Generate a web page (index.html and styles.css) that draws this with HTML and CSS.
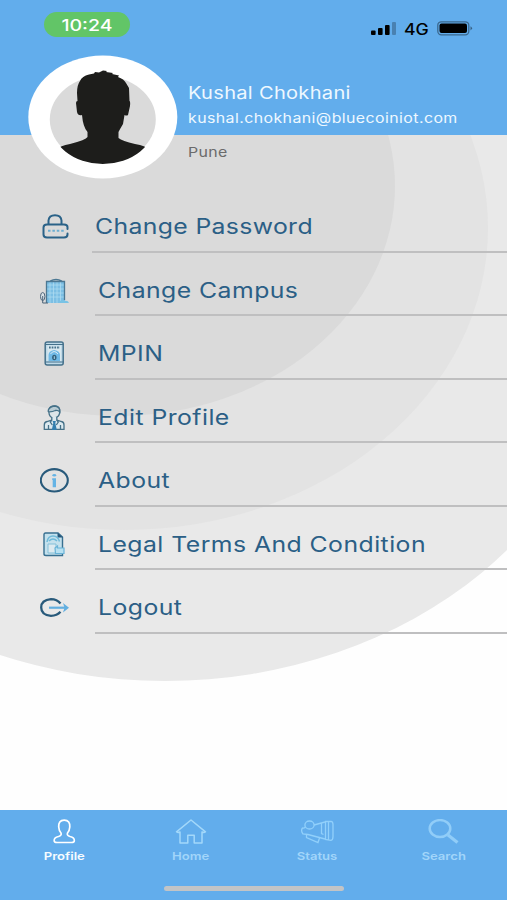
FILE: index.html
```html
<!DOCTYPE html>
<html lang="en">
<head>
<meta charset="utf-8">
<title>Profile</title>
<link rel="stylesheet" href="styles.css">
</head>
<body>
<div class="screen">
  <svg class="rings" viewBox="0 0 507 675" aria-hidden="true">
    <ellipse cx="165" cy="176" rx="448" ry="370" fill="#e9e9e9"/>
    <ellipse cx="124" cy="93" rx="364" ry="302" fill="#e3e3e3"/>
    <ellipse cx="118" cy="51" rx="277" ry="230" fill="#dadada"/>
  </svg>
  <header class="header">
    <div class="status">
      <div class="clock"><span class="wide">10:24</span></div>
      <div class="signals">
        <svg width="26" height="14" viewBox="0 0 26 14"><rect x="0" y="8.500" width="4.600" height="4.500" rx="1"/><rect x="7" y="6" width="4.600" height="7" rx="1"/><rect x="14" y="3" width="4.600" height="10" rx="1"/><rect x="21" y="0" width="4" height="13" rx="1" opacity=".25"/></svg>
        <span class="network wide">4G</span>
        <svg class="battery" width="36" height="15" viewBox="0 0 36 15"><rect x=".8" y=".8" width="31" height="13" rx="3.500" fill="none" stroke="#000" stroke-opacity=".4" stroke-width="1.300"/><rect x="2.500" y="2.500" width="27.500" height="9.500" rx="2"/><path d="M33.500 5.200q3 2.200 0 4.200z" opacity=".45"/></svg>
      </div>
    </div>
  </header>
  <section class="person">
    <svg class="avatar" width="150" height="124" viewBox="0 0 150 124">
      <defs><clipPath id="face"><path d="M0 0H150V66H127.800A53 43 0 0 1 21.800 66H0z"/></clipPath></defs>
      <ellipse cx="74.800" cy="62" rx="74.500" ry="61.500" fill="#fff"/>
      <ellipse cx="74.800" cy="64.500" rx="53" ry="43.500" fill="#dadada"/>
      <path clip-path="url(#face)" fill="#1d1d1b" d="M49.500 46L49 38Q49 30 52 26Q54 21 61 19.500L66 18.500L67 17L71 17.500L75 15.500L79 16L78 17L85 18L84 19L91 20.500L90 22Q96 24 98 28L101 33L101.500 46Q102.500 46 102 51L100 60Q98.500 61 96.500 60L95 69Q92 74 90.500 77V83Q94 86 107 89Q118 91 120 94L120 112H29V94Q32 91 42 89Q58 85 59.500 82V77Q55 72 54 60Q50 61 49 57L48 48Q48 46 49.500 46Z"/>
    </svg>
    <div class="details">
      <div class="name"><span class="wide">Kushal Chokhani</span></div>
      <div class="email"><span class="wide">kushal.chokhani@bluecoiniot.com</span></div>
      <div class="city"><span class="wide">Pune</span></div>
    </div>
  </section>
  <nav class="menu">
    <a class="row first"><svg class="icon" viewBox="0 0 30 26" fill="none" stroke="#2a6288" stroke-width="2"><path d="M7.500 10V6.500Q8 1.200 14 1.200T20.500 6.500V10M26.500 15V13Q26.500 10.500 23 10.500H6Q2.500 10.500 2.500 13.500V20.500Q2.500 23.500 6 23.500H23Q26.500 23.500 26.500 20.500V19.500" stroke-linecap="round"/><path d="M7 16.800H23" stroke="#6caed1" stroke-width="2" stroke-dasharray="2.500 1.900"/></svg><span class="label"><span class="wide">Change Password</span></span></a>
    <a class="row"><svg class="icon" viewBox="0 0 30 26"><path d="M7 3H25V25H7z" fill="#7cbfe4"/><path d="M10 3V25M13.500 3V25M17 3V25M20.500 3V25M7 7H25M7 11H25M7 15H25M7 19H25" stroke="#b3def2" stroke-width=".7"/><path d="M6.500 25V3.500H24.500V22M10 3Q13 1.500 16 1.500T22 3" fill="none" stroke="#4c7893" stroke-width="1.300"/><ellipse cx="2.700" cy="18.500" rx="2.200" ry="4" fill="#d8e1e7" stroke="#4d6479"/><path d="M2.700 18V25H8" fill="none" stroke="#4d6479"/><path d="M19 25Q20 21 24 23Q28 22 29 25z" fill="#79c3e5"/></svg><span class="label"><span class="wide">Change Campus</span></span></a>
    <a class="row"><svg class="icon" viewBox="0 0 30 26"><rect x="5.200" y="1" width="18" height="23" rx="2" fill="#bfdae8" stroke="#45718b" stroke-width="1.500"/><path d="M5.500 3.500H23.500M5.500 21H23.500" stroke="#45718b" stroke-width="1.200"/><rect x="7.500" y="4.500" width="13.500" height="15.500" fill="#d8e8ef"/><path d="M9 6.500H20" stroke="#45718b" stroke-width="2" stroke-dasharray="1.700 1"/><path d="M8.500 20V14Q8.500 10 14.200 9Q20 10 20 14V20z" fill="#6fb9e6"/><path d="M10.500 13Q14 8 18 13" fill="none" stroke="#ddecf4"/><ellipse cx="14.300" cy="16.500" rx="2.200" ry="2.800" fill="#32617c"/><path d="M14.300 15.200V18" stroke="#aad7ed"/></svg><span class="label"><span class="wide">MPIN</span></span></a>
    <a class="row"><svg class="icon" viewBox="0 0 30 26" fill="none" stroke="#457188" stroke-width="1.300"><path d="M8.800 7Q8.300 1 14.300 1T19.800 7Q19.300 12.500 14.300 12.800T8.800 7Z" fill="#dde5e8"/><path d="M8.300 7V5Q10.300 1 15.300 1Q20.300 2 19.800 7Q18.300 5 15.300 5.500Q12.300 7 8.800 6.800" fill="#b8cbd3"/><path d="M11.800 12V15L7 16.500Q4.300 17 4.300 20V24.300H24V20Q24 17 21.500 16.500L16.800 15V12" fill="#dbe9ef"/><path d="M8.500 24V20M20.500 24V20M11.800 15L10.300 17L12.300 20M16.800 15L18.300 17L16.300 20"/><path d="M12.600 16H15.900L15.300 18L16.800 25H11.800L13.300 18z" fill="#337fae" stroke="none"/></svg><span class="label"><span class="wide">Edit Profile</span></span></a>
    <a class="row"><svg class="icon" viewBox="0 0 30 26"><ellipse cx="14.300" cy="12.300" rx="13.500" ry="11.200" fill="none" stroke="#285a7b" stroke-width="2.100"/><ellipse cx="14.300" cy="7.300" rx="1.900" ry="1.200" fill="#66b4e5"/><path d="M12.200 10.300H16V19.300H12.700V12H12.200z" fill="#66b4e5"/></svg><span class="label"><span class="wide">About</span></span></a>
    <a class="row"><svg class="icon" viewBox="0 0 30 26"><path d="M5.500 1H18L22.500 5V23.500H6Q4 23.500 4 22V2.500Q4 1 5.500 1Z" fill="#c4e1ed" stroke="#376f90" stroke-width="1.400"/><path d="M17.500 1V5.500H23z" fill="#28587a"/><path d="M7 10Q8 4 13 4T19.500 9.500M9 9Q13 5 17 9" fill="none" stroke="#70bad9" stroke-width="1.500"/><path d="M8 12H16V21H8z" fill="#dceaf0" stroke="#83bfd8"/><path d="M15 16L17.500 14V16H24V21.500H15.500z" fill="#b7e0f1" stroke="#69b3d7" stroke-width="1.200"/></svg><span class="label"><span class="wide">Legal Terms And Condition</span></span></a>
    <a class="row"><svg class="icon" viewBox="0 0 30 26" fill="none"><path d="M20.500 8.500Q17 4.200 11 4.200Q1.200 5 1.200 12.500T11 20.800Q17 20.800 20.500 16.800" stroke="#285a7b" stroke-width="2.300"/><path d="M9 12.700H27" stroke="#62afe0" stroke-width="2.200"/><path d="M23 8L29 12.700L23 17.500L24.500 12.700z" fill="#62afe0"/></svg><span class="label"><span class="wide">Logout</span></span></a>
  </nav>
  <footer class="tabs">
    <a class="tab active"><svg viewBox="0 0 34 26" fill="none" stroke="#fff" stroke-width="1.700"><path d="M17.200 1.200C13 1.200 11.500 4 11.700 8Q12 12 14 14Q15 16.500 11.500 17.500Q7 18.500 7.200 21.500Q7 23.500 10 23.500H24.500Q27.500 23.500 27.300 21.500Q27.500 18.500 23 17.500Q19.500 16.500 20.500 14Q22.500 12 22.800 8C23 4 21.500 1.200 17.200 1.200Z"/></svg><span class="wide">Profile</span></a>
    <a class="tab"><svg viewBox="0 0 34 26" fill="none" stroke="#a3d8fa" stroke-width="1.500"><path d="M2.500 12.800L17 1L31.500 12.800Q30 14.200 28 13V24H20.200V16.200H13.800V24H6V13Q4 14.200 2.500 12.800Z" stroke-linejoin="round"/></svg><span class="wide">Home</span></a>
    <a class="tab"><svg viewBox="0 0 34 26" fill="none" stroke="#91d0fb" stroke-width="1.300"><ellipse cx="9.500" cy="6" rx="4.600" ry="4"/><path d="M5.500 8Q4 9.500 2.500 9Q.5 11.500 3 15L8 15.500L25 20M14 6L25 3M6.500 16V18.500L18 23.500L19.500 19M21.500 4.500V14.500L23.500 15.500"/><path d="M25.500 2.500L31 2.300Q33 2.300 33 5.500V17.500Q33 21 31 21.300L25.500 20.500zM28.500 2.500V21"/></svg><span class="wide">Status</span></a>
    <a class="tab"><svg viewBox="0 0 34 26" fill="none" stroke="#91cdf8" stroke-width="2.500"><ellipse cx="13" cy="9.500" rx="10.300" ry="8.400"/><path d="M21 16L30.500 23.500" stroke-width="3.200"/></svg><span class="wide">Search</span></a>
    <div class="home-bar"></div>
  </footer>
</div>
</body>
</html>
```

FILE: styles.css
```css
* { box-sizing: border-box; }
body { margin: 0; font-family: Inter, "Liberation Sans", sans-serif; }
.screen { position: relative; width: 507px; height: 900px; overflow: hidden; background: #fefefe; display: flex; flex-direction: column; }
.rings { position: absolute; left: 0; top: 135px; width: 507px; height: 675px; }
.header { position: relative; height: 135px; flex: none; background: #62adec; }
.status { display: flex; justify-content: space-between; padding: 12px 34px 0 44px; }
.clock { width: 86px; height: 25px; border-radius: 13px; background: #62c567; color: #fff; font-size: 16px; font-weight: 500; line-height: 26px; text-align: center; }
.clock .wide { transform: scaleX(1.22); transform-origin: center; }
.signals { display: flex; align-items: flex-start; padding-top: 10px; width: 102px; }
.signals svg { flex: none; }
.network { width: 31px; margin: -1px 0 0 7px; font-size: 15.5px; font-weight: 500; line-height: 18px; }
.signals .network { transform: scaleX(1.14); }
.battery { margin: -1px 0 0 3px; }
.wide { display: inline-block; white-space: nowrap; transform: scaleX(1.18); transform-origin: left center; }
.person { position: relative; display: flex; height: 124px; margin-top: -80px; padding-left: 28px; flex: none; }
.avatar { flex: none; }
.details { padding: 26px 0 0 10px; color: #eef8ff; }
.name { font-size: 17px; line-height: 25px; height: 26px; letter-spacing: .25px; }
.email { font-size: 13.5px; line-height: 22px; height: 34px; letter-spacing: .34px; }
.city { font-size: 13.5px; line-height: 22px; color: #6b6b6b; letter-spacing: .25px; }
.menu { position: relative; margin-top: 10px; flex: none; }
.row { display: flex; height: 63.5px; padding-left: 40px; color: #2b5f86; }
.icon { width: 30px; height: 26px; margin-top: 25px; flex: none; }
.label { flex: 1; margin-left: 25px; padding: 24px 0 0 2.6px; font-size: 21px; line-height: 28px; letter-spacing: .38px; border-bottom: 2px solid #bfbfc0; }
.first .icon { margin-left: 1px; margin-right: -1px; }
.first .label { margin-left: 22px; letter-spacing: .3px; }
.tabs { position: relative; display: grid; grid-template-columns: repeat(4, 1fr); height: 90px; margin-top: auto; flex: none; background: #62adec; }
.tab { display: flex; flex-direction: column; align-items: center; padding: 9px 0 0 1px; color: #a1d5fa; font-size: 11px; font-weight: 600; line-height: 14px; }
.tab svg { width: 34px; height: 26px; margin-bottom: 4px; }
.tab .wide { transform: scaleX(1.19); transform-origin: center; }
.active { color: #f6fcff; }
.home-bar { position: absolute; left: 164px; bottom: 9px; width: 180px; height: 5px; border-radius: 3px; background: #c2c4c6; }
```
